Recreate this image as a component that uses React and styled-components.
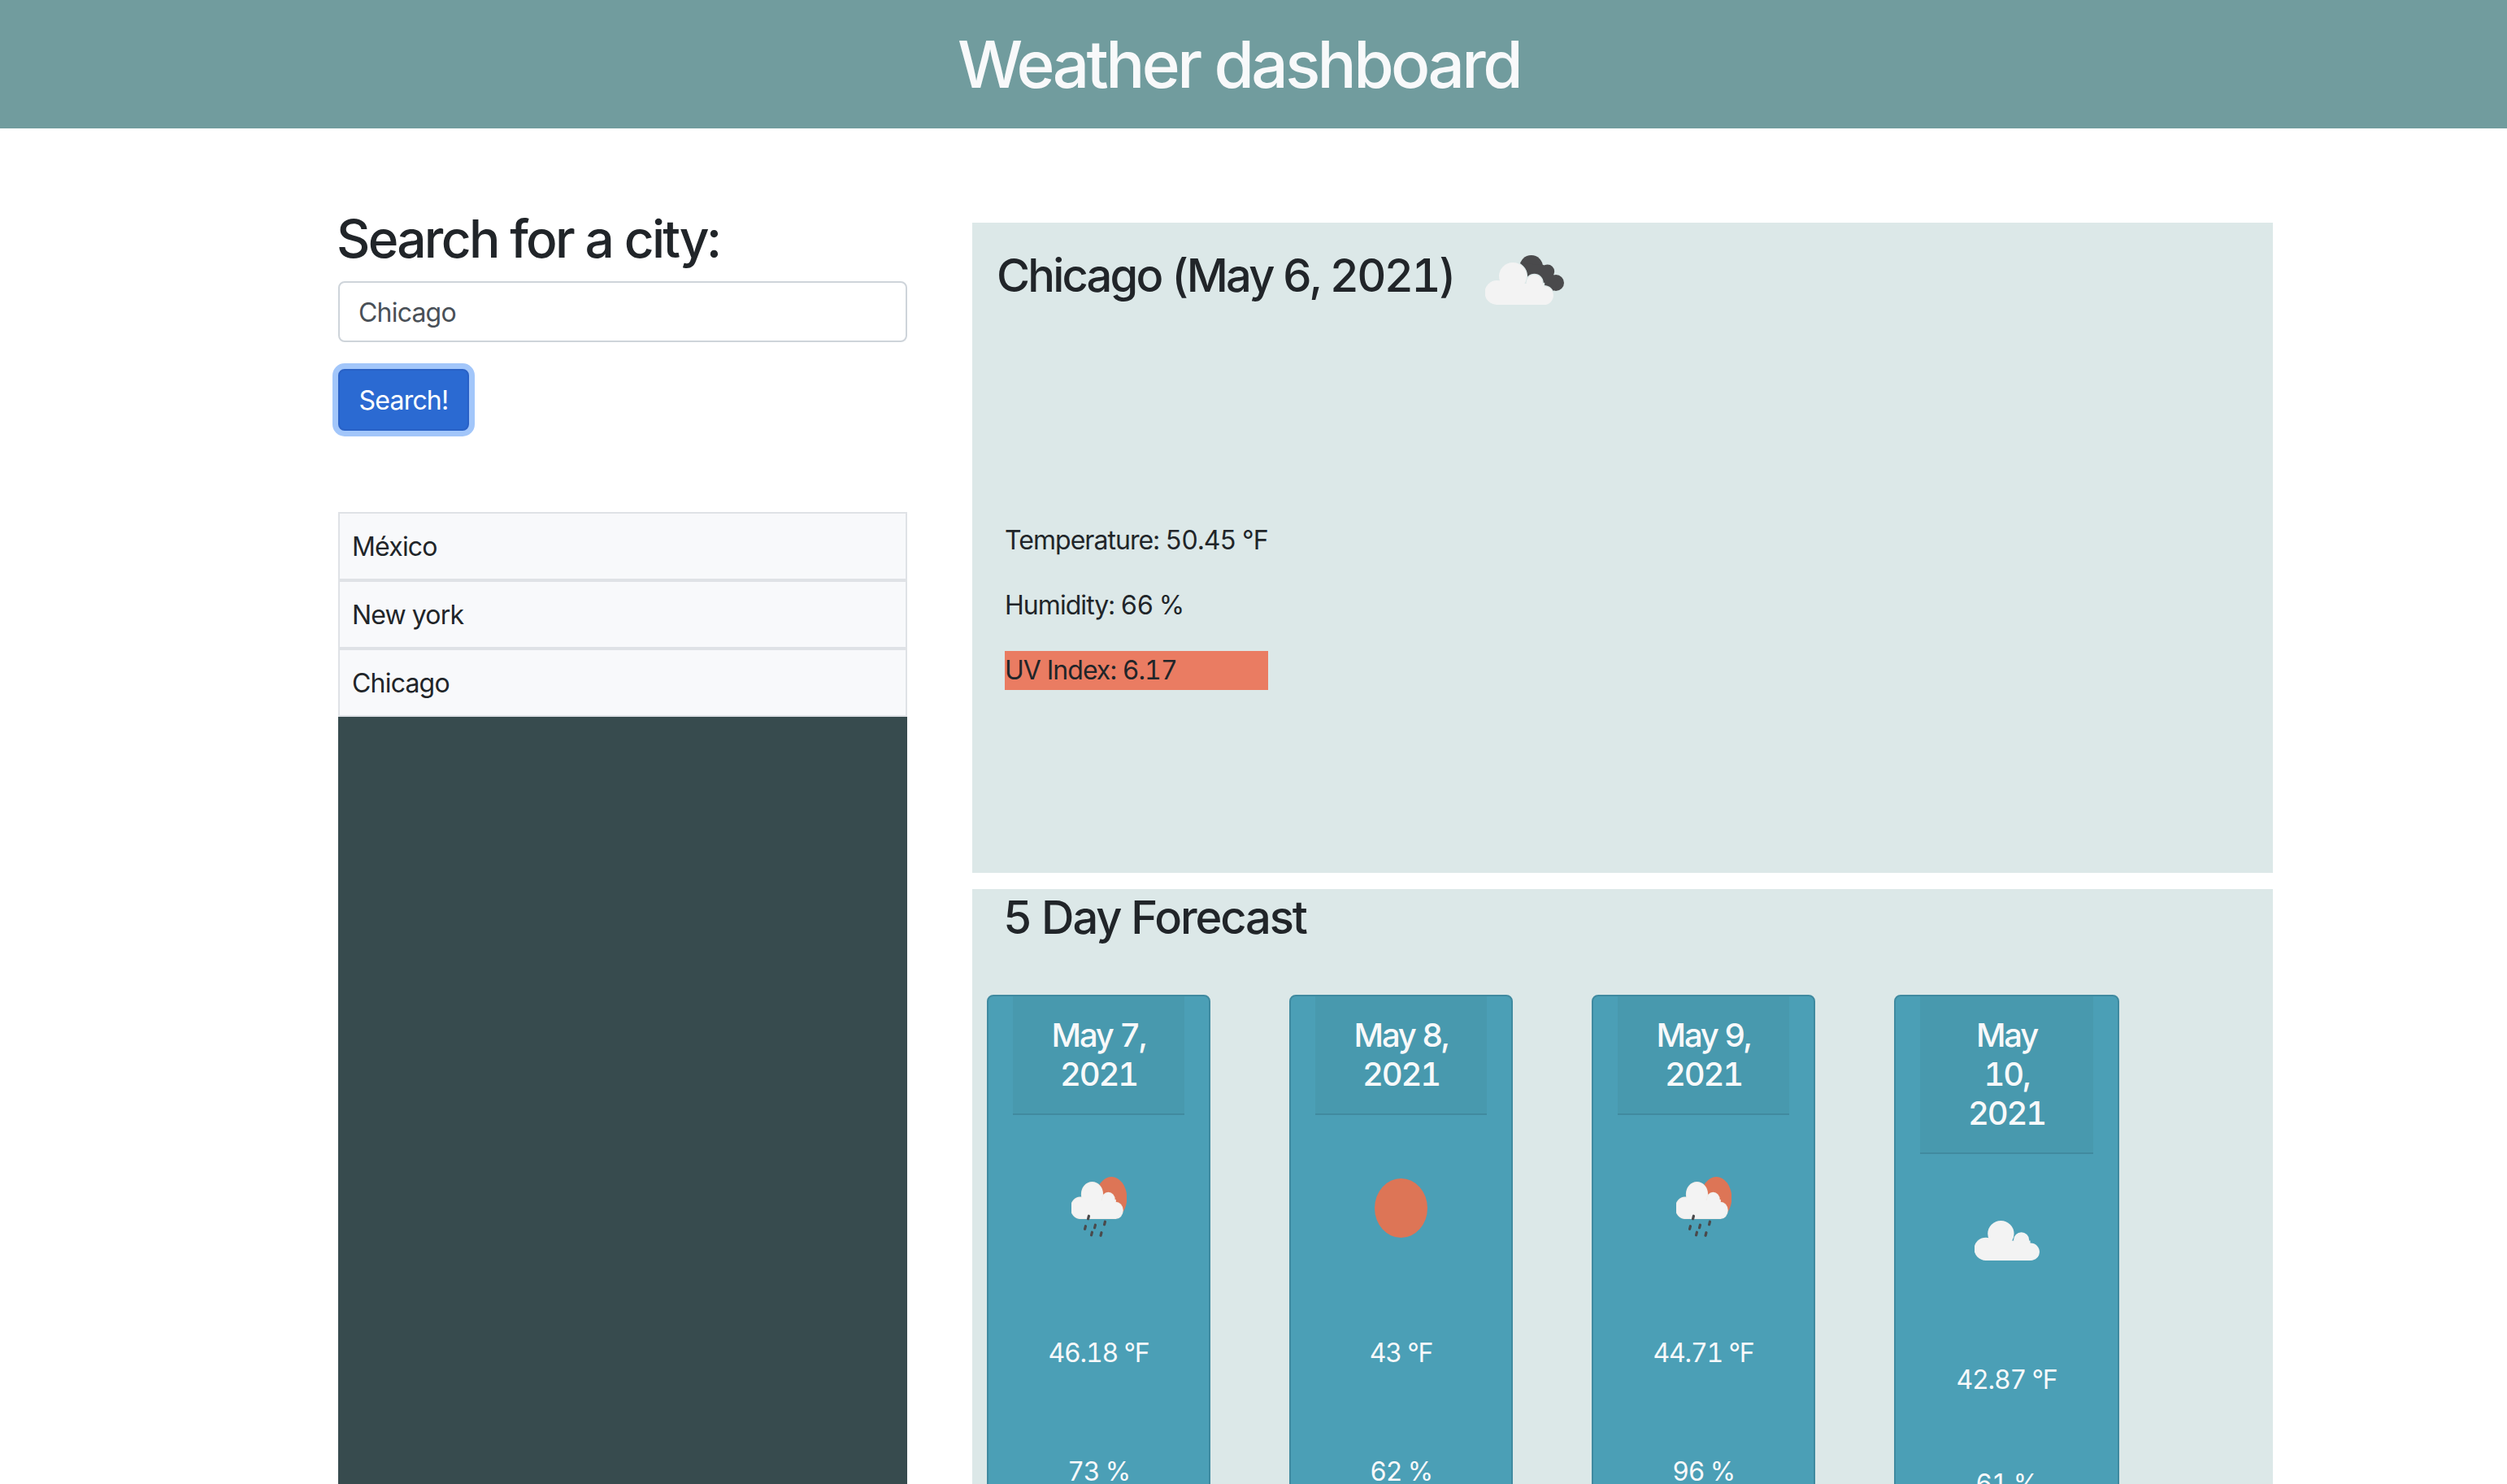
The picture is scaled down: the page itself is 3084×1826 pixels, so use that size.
import React from "react";
import styled, { createGlobalStyle } from "styled-components";

const GlobalStyle = createGlobalStyle`
  * {
    box-sizing: border-box;
  }
  html, body {
    height: 100%;
    margin: 0;
    overflow: hidden;
    background: #fff;
    color: #212529;
    font-family: "Inter", "Liberation Sans", sans-serif;
    font-size: 32px;
    font-variant-numeric: tabular-nums;
    line-height: 48px;
    letter-spacing: -0.8px;
  }
`;

const Page = styled.div`
  display: flex;
  flex-direction: column;
  height: 100vh;
  overflow: hidden;
`;

const Banner = styled.header`
  flex: none;
  height: 158px;
  padding-right: 36px;
  display: flex;
  align-items: center;
  justify-content: center;
  background: #719c9e;
`;

const BannerTitle = styled.h1`
  margin: 0;
  color: #f8f9fa;
  font-size: 80px;
  font-weight: 500;
  line-height: 96px;
  letter-spacing: -3.6px;
`;

const Main = styled.main`
  flex: 1;
  min-height: 0;
  display: flex;
  gap: 80px;
  padding: 0 288px 0 416px;
`;

const Sidebar = styled.aside`
  flex: none;
  width: 700px;
  display: flex;
  flex-direction: column;
  padding-top: 97px;
`;

const SearchTitle = styled.h2`
  margin: 0 0 14px -2px;
  font-size: 64px;
  font-weight: 500;
  line-height: 77px;
  letter-spacing: -2.7px;
`;

const SearchInput = styled.input`
  width: 100%;
  height: 75px;
  padding: 1px 23px 0;
  border: 2px solid #ced4da;
  border-radius: 8px;
  color: #495057;
  font: inherit;
  letter-spacing: inherit;
  outline: none;
`;

const SearchButton = styled.button`
  align-self: flex-start;
  width: 161px;
  height: 76px;
  margin-top: 33px;
  padding: 1px 0 0;
  border: 2px solid #2961c6;
  border-radius: 8px;
  background: #2b6ad2;
  box-shadow: 0 0 0 7px #a2c6fa;
  color: #fff;
  font: inherit;
  letter-spacing: inherit;
`;

const HistoryList = styled.ul`
  list-style: none;
  margin: 100px 0 0;
  padding: 0;
`;

const HistoryItem = styled.li`
  height: 84px;
  padding: 17px 15px 15px;
  border: 2px solid #dfe2e6;
  background: #f8f9fb;
`;

const DarkFill = styled.div`
  flex: 1;
  background: #374b4e;
`;

const Content = styled.section`
  flex: 1;
  min-width: 0;
  padding-top: 116px;
`;

const CurrentPanel = styled.div`
  height: 800px;
  padding: 32px 30px 0;
  background: #dce8e8;
`;

const CurrentHead = styled.div`
  display: flex;
  align-items: flex-start;
  gap: 38px;
`;

const CurrentTitle = styled.h3`
  margin: 0;
  font-size: 56px;
  font-weight: 500;
  line-height: 67px;
  letter-spacing: -2.8px;
`;

const CurrentIcon = styled.svg`
  flex: none;
  margin-top: 8px;
`;

const Details = styled.div`
  width: 324px;
  margin: 266px 0 0 10px;
`;

const Detail = styled.p`
  margin: 0 0 32px;
  white-space: nowrap;
  letter-spacing: -0.95px;
  background: ${(props) => props.$bg || "transparent"};
  &:last-child {
    margin-bottom: 0;
  }
`;

const ForecastPanel = styled.div`
  margin-top: 20px;
  height: 900px;
  padding: 2px 0 0 38px;
  background: #dce8e8;
`;

const ForecastTitle = styled.h3`
  margin: 0 0 61px;
  font-size: 56px;
  font-weight: 500;
  line-height: 67px;
  letter-spacing: -2.1px;
`;

const CardRow = styled.div`
  display: flex;
  gap: 97px;
  margin-left: -20px;
`;

const Card = styled.article`
  flex: none;
  width: ${(props) => (props.$wide ? 277 : 275)}px;
  height: 800px;
  padding: 0 30px;
  border: 2px solid #3f8aa0;
  border-radius: 8px;
  background: #4b9fb6;
  color: #f8f9fa;
  text-align: center;
`;

const CardHead = styled.div`
  margin: 0;
  padding: 24px 0;
  border-bottom: 2px solid #418a9f;
  background: #4899ae;
  font-size: 40px;
  line-height: 48px;
  font-weight: 500;
  letter-spacing: -2.2px;
`;

const IconSlot = styled.div`
  display: flex;
  justify-content: center;
  align-items: flex-start;
  height: ${(props) => props.$height}px;
  padding-top: ${(props) => props.$top}px;
`;

const Reading = styled.p`
  margin: 0 0 ${(props) => props.$gap}px;
  white-space: nowrap;
  letter-spacing: -1.2px;
`;

const LIGHT = "#f3f3f3";
const DARK = "#4a4a4c";
const SUN = "#dd7556";

// the puffs of the cloud, in a box of 84 x 52
const CloudPuffs = ({ fill, stroke }) => (
  <g fill={fill} stroke={stroke} strokeWidth={stroke ? 2.4 : 0}>
    <circle cx="14.5" cy="37" r="15" />
    <circle cx="34" cy="17" r="17" />
    <circle cx="60.5" cy="25" r="10" />
    <circle cx="72.5" cy="40.6" r="11.4" />
    <rect x="14" y="26" width="58" height="26" />
  </g>
);

const CloudShape = ({ halo }) => (
  <>
    {halo && <CloudPuffs fill={halo} stroke={halo} />}
    <CloudPuffs fill={LIGHT} />
  </>
);

const BrokenClouds = () => (
  <CurrentIcon width="97" height="61" viewBox="0 0 97 61">
    <g fill={DARK}>
      <circle cx="56.7" cy="14.3" r="14.3" />
      <circle cx="76.7" cy="20" r="8.5" />
      <circle cx="87" cy="34" r="10" />
      <polygon points="45,10 72,12 90,30 84,44 60,40" />
    </g>
    <g transform="translate(0 9)">
      <CloudShape halo="#dce8e8" />
    </g>
  </CurrentIcon>
);

const DROPS = [
  [21, 50],
  [17, 62.5],
  [29, 61],
  [41, 57],
  [25, 70],
  [36.5, 70.5],
];

const RainIcon = () => (
  <svg width="68" height="74" viewBox="0 0 68 74">
    <ellipse cx="49.3" cy="26" rx="19" ry="26" fill={SUN} />
    <g transform="translate(0 7) scale(0.75 0.846)">
      <CloudShape halo="#f0ece8" />
    </g>
    <g fill={DARK}>
      {DROPS.map(([x, y]) => (
        <rect
          key={x + "-" + y}
          x={x - 1.6}
          y={y - 3.4}
          width="3.2"
          height="6.8"
          rx="1.5"
          transform={`rotate(14 ${x} ${y})`}
        />
      ))}
    </g>
  </svg>
);

const SunIcon = () => (
  <svg width="65" height="73" viewBox="0 0 65 73">
    <ellipse cx="32.5" cy="36.5" rx="32.5" ry="36.5" fill={SUN} />
  </svg>
);

const CloudIcon = () => (
  <svg width="80" height="49" viewBox="0 0 84 52" preserveAspectRatio="none">
    <CloudShape />
  </svg>
);

const FORECAST = [
  { date: ["May 7,", "2021"], icon: <RainIcon />, temp: "46.18 °F", hum: "73 %", slot: 269, top: 76, gap: 98 },
  { date: ["May 8,", "2021"], icon: <SunIcon />, temp: "43 °F", hum: "62 %", slot: 269, top: 78, gap: 98 },
  { date: ["May 9,", "2021"], icon: <RainIcon />, temp: "44.71 °F", hum: "96 %", slot: 269, top: 76, gap: 98 },
  { date: ["May", "10,", "2021"], icon: <CloudIcon />, temp: "42.87 °F", hum: "61 %", slot: 254, top: 82, gap: 80, wide: true },
];

export default function App() {
  return (
    <Page>
      <GlobalStyle />
      <Banner>
        <BannerTitle>Weather dashboard</BannerTitle>
      </Banner>
      <Main>
        <Sidebar>
          <SearchTitle>Search for a city:</SearchTitle>
          <SearchInput defaultValue="Chicago" />
          <SearchButton>Search!</SearchButton>
          <HistoryList>
            <HistoryItem>México</HistoryItem>
            <HistoryItem>New york</HistoryItem>
            <HistoryItem>Chicago</HistoryItem>
          </HistoryList>
          <DarkFill />
        </Sidebar>
        <Content>
          <CurrentPanel>
            <CurrentHead>
              <CurrentTitle>Chicago (May 6, 2021)</CurrentTitle>
              <BrokenClouds />
            </CurrentHead>
            <Details>
              <Detail>Temperature: 50.45 °F</Detail>
              <Detail>Humidity: 66 %</Detail>
              <Detail $bg="#ea7c62">UV Index: 6.17</Detail>
            </Details>
          </CurrentPanel>
          <ForecastPanel>
            <ForecastTitle>5 Day Forecast</ForecastTitle>
            <CardRow>
              {FORECAST.map((day) => (
                <Card key={day.temp} $wide={day.wide}>
                  <CardHead>
                    {day.date.map((line) => (
                      <div key={line}>{line}</div>
                    ))}
                  </CardHead>
                  <IconSlot $height={day.slot} $top={day.top}>
                    {day.icon}
                  </IconSlot>
                  <Reading $gap={day.gap}>{day.temp}</Reading>
                  <Reading $gap={0}>{day.hum}</Reading>
                </Card>
              ))}
            </CardRow>
          </ForecastPanel>
        </Content>
      </Main>
    </Page>
  );
}
